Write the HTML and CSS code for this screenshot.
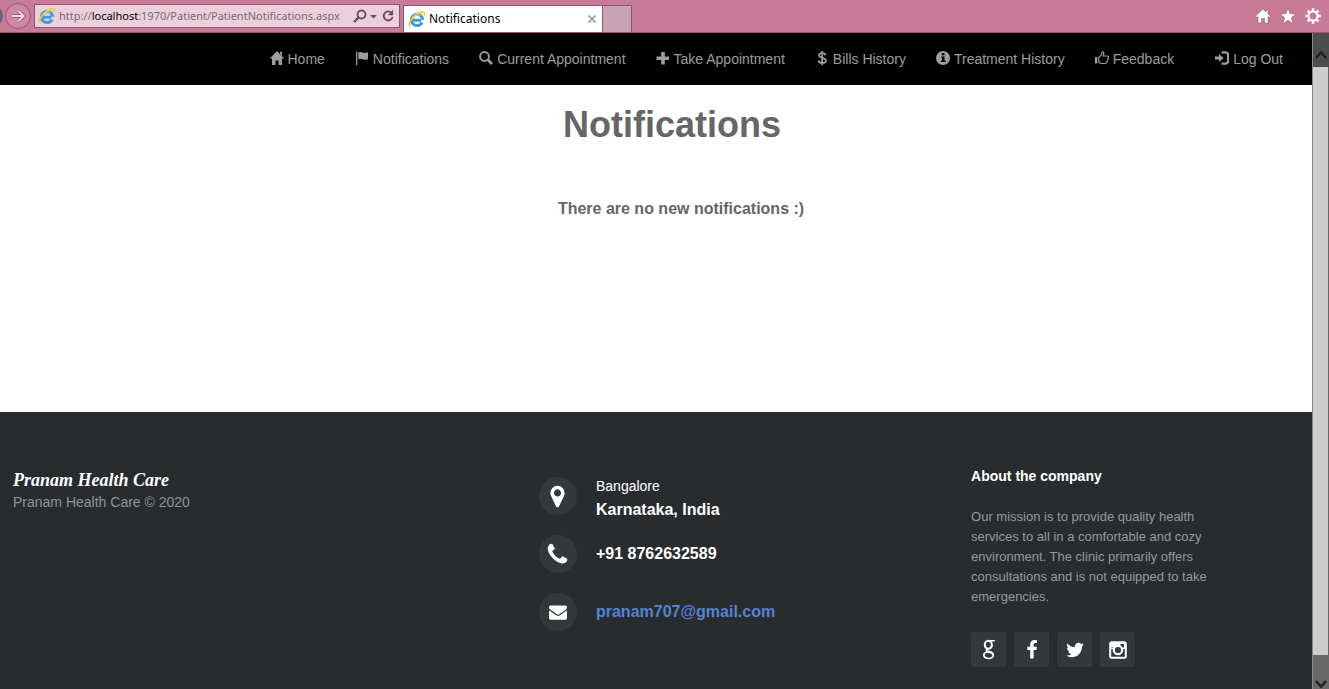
FILE: index.html
```html
<!DOCTYPE html>
<html lang="en">
<head>
<meta charset="utf-8">
<title>Notifications</title>
<link rel="stylesheet" href="styles.css">
</head>
<body>
<svg class="defs" aria-hidden="true">
  <defs>
    <symbol id="ie" viewBox="0 0 18 18">
      <path d="M4 10.2h9.2M14 12.500A5.600 5.600 0 1 1 14.600 9.800" fill="none" stroke="#3f9ad8" stroke-width="3"/>
      <path d="M4.500 7.500a5 5 0 0 1 8-1.400" fill="none" stroke="#8ccff2" stroke-width="1.200"/>
      <path d="M2.600 16.200C-.8 15 3.200 8 9 4.200c4-2.800 7.600-3.200 7.600-.8 0 .8-.3 1.600-.7 2.300" fill="none" stroke="#f0cb3c" stroke-width="1.700"/>
    </symbol>
  </defs>
</svg>

<header class="browser">
  <button class="round back" aria-label="Back"></button>
  <button class="round" aria-label="Forward">
    <svg viewBox="0 0 26 26"><path d="M6.500 13h12M13.500 7.500l5.500 5.500-5.500 5.500" fill="none" stroke="#8f4a66" stroke-width="4"/><path d="M6.500 13h12M13.500 7.500l5.500 5.500-5.500 5.500" fill="none" stroke="#f3dbe4" stroke-width="2.300"/></svg>
  </button>
  <div class="address">
    <svg class="ie"><use href="#ie"/></svg>
    <span class="url">http://<b>localhost</b>:1970/Patient/PatientNotifications.aspx</span>
    <button class="tool" aria-label="Search"><svg viewBox="0 0 14 14"><circle cx="8.500" cy="5.500" r="4" fill="none" stroke="#6d4c59" stroke-width="1.800"/><path d="M5.500 8.500L1 13" stroke="#6d4c59" stroke-width="2.400"/></svg></button>
    <button class="tool small" aria-label="Show addresses"><svg viewBox="0 0 8 14"><path d="M0 6h7L3.500 9.500z" fill="#6d4c59"/></svg></button>
    <button class="tool" aria-label="Refresh"><svg viewBox="0 0 14 14"><path d="M10.500 3.800A4.500 4.500 0 1 0 11.600 8" fill="none" stroke="#6d4c59" stroke-width="1.900"/><path d="M12 .8v5.400H6.800z" fill="#6d4c59"/></svg></button>
  </div>
  <div class="tab">
    <svg class="ie"><use href="#ie"/></svg>
    <span class="tab-title">Notifications</span>
    <button class="tool" aria-label="Close tab"><svg viewBox="0 0 14 14"><path d="M3.500 3.500l7 7M10.500 3.500l-7 7" stroke="#999" stroke-width="1.700"/></svg></button>
  </div>
  <button class="new-tab" aria-label="New tab"></button>
  <div class="browser-tools">
    <button class="tool" aria-label="Home page"><svg viewBox="0 0 16 16"><path d="M8 1L.5 8.300l1.300 1.200L3 8.500V15h3.500v-4.500h3V15H13V8.500l1.200 1 1.300-1.200L13 6V2h-2v2z" fill="#fff" stroke="#8a4560" stroke-width=".5"/></svg></button>
    <button class="tool" aria-label="Favorites"><svg viewBox="0 0 16 16"><path d="M8 0l2.100 5.800 6 .2-4.700 3.700 1.700 6L8 12.200l-5.100 3.500 1.700-6L-.1 6l6-.2z" fill="#fff" stroke="#8a4560" stroke-width=".5"/></svg></button>
    <button class="tool" aria-label="Settings"><svg viewBox="0 0 16 16"><g stroke="#fff" fill="none"><circle cx="8" cy="8" r="4.500" stroke-width="2"/><path stroke-width="2.500" d="M8 .3v2.700M8 13v2.700M.3 8H3M13 8h2.700M2.600 2.600l1.900 1.900M11.500 11.500l1.900 1.900M2.600 13.400l1.900-1.900M11.500 4.500l1.900-1.900"/></g></svg></button>
  </div>
</header>

<div class="viewport">
  <div class="page">
    <nav class="nav">
      <a href="#"><svg viewBox="0 0 14 14"><path d="M7 0l7.200 7.400H12V14H8.500V9.500h-3V14H2V7.400H-.2zM10 .8h2v4l-2-2z"/></svg>Home</a>
      <a href="#"><svg viewBox="0 0 14 14"><path d="M1 .5h1.300V14H1zM3.300 1.600C6-.2 7.500 3 13 1.300v6.900C8 10 6.500 6.400 3.300 8.400z"/></svg>Notifications</a>
      <a href="#"><svg viewBox="0 0 14 14"><circle cx="5.500" cy="5.500" r="4.400" fill="none" stroke="currentColor" stroke-width="2"/><path d="M8.600 8.600l4.400 4.400" stroke="currentColor" stroke-width="2.800"/></svg>Current Appointment</a>
      <a href="#"><svg viewBox="0 0 14 14"><path d="M5.200 1h3.600v4.400H13V9H8.800v4.500H5.200V9H.5V5.400h4.700z"/></svg>Take Appointment</a>
      <a href="#"><svg viewBox="0 0 14 14"><path d="M10.500 4.300C10 1.400 4 1.400 4 4.300c0 3.400 7 1.700 7 5.400 0 3.200-7 3.100-7.500-.2M7.200 0v14" fill="none" stroke="currentColor" stroke-width="1.700"/></svg>Bills History</a>
      <a href="#"><svg viewBox="0 0 14 14"><circle cx="7" cy="7" r="7"/><path d="M5.800 2h2.700v2.200H5.800zM5 5.400h3.500v4.300h1.200V11H4.800V9.700H6V6.600H5z" fill="#000"/></svg>Treatment History</a>
      <a href="#"><svg viewBox="0 0 14 14"><path d="M0 6h2.300v6.500H0z"/><path d="M3.800 6.500L6.500 3.800 7 1.300c1.500-1.200 2.500.6 1.300 3.700h4c1.500.3 1.500 2 .6 2.500.4 1-.1 1.700-.6 2 .2 1-.3 1.500-.8 1.800 0 1-.7 1.200-1.500 1.200H7c-1.500 0-2-.8-3.200-1z" fill="none" stroke="currentColor" stroke-width="1.200"/></svg>Feedback</a>
      <a href="#" class="logout"><svg viewBox="0 0 14 14"><path d="M0 5.500h4V3l4.500 4L4 11V8.500H0z"/><path d="M6.500 1.300H11l2 1.500v8.400l-2 1.500H6.500" fill="none" stroke="currentColor" stroke-width="2.200"/></svg>Log Out</a>
    </nav>

    <main class="content">
      <h1>Notifications</h1>
      <p class="message">There are no new notifications :)</p>
    </main>

    <footer class="footer">
      <section>
        <h2 class="brand">Pranam Health Care</h2>
        <p class="copyright">Pranam Health Care © 2020</p>
      </section>
      <address class="contacts">
        <div class="contact">
          <span class="disc"><svg viewBox="0 0 1792 1792"><path d="M1152 640q0-106-75-181t-181-75-181 75-75 181 75 181 181 75 181-75 75-181zm256 0q0 109-33 179l-364 774q-16 33-47.500 52t-67.500 19-67.500-19-46.500-52l-365-774q-33-70-33-179 0-212 150-362t362-150 362 150 150 362z"/></svg></span>
          <p class="place"><span class="city">Bangalore</span>Karnataka, India</p>
        </div>
        <div class="contact">
          <span class="disc"><svg viewBox="0 0 1792 1792"><path d="M1600 1240q0 27-10 70.500t-21 68.500q-21 50-122 106-94 51-186 51-27 0-53-3.500t-57.500-12.500-47-14.500-55.500-20.500-49-18q-98-35-175-83-127-79-264-216t-216-264q-48-77-83-175-3-9-18-49t-20.500-55.500-14.500-47-12.500-57.500-3.500-53q0-92 51-186 56-101 106-122 25-11 68.500-21t70.500-10q14 0 21 3 18 6 53 76 11 19 30 54t35 63.500 31 53.500q3 4 17.500 25t21.500 35.500 7 28.500q0 20-28.500 50t-62 55-62 53-28.500 46q0 9 5 22.500t8.500 20.500 14 24 11.500 19q76 137 174 235t235 174q2 1 19 11.500t24 14 20.500 8.500 22.500 5q18 0 46-28.500t53-62 55-62 50-28.500q14 0 28.500 7t35.500 21.500 25 17.500q25 15 53.500 31t63.500 35 54 30q70 35 76 53 3 7 3 21z"/></svg></span>
          <p>+91 8762632589</p>
        </div>
        <div class="contact">
          <span class="disc mail"><svg viewBox="0 0 1792 1792"><path d="M1792 710v794q0 66-47 113t-113 47h-1472q-66 0-113-47t-47-113v-794q44 49 101 87 362 246 497 345 57 42 92.500 65.500t94.500 48 110 24.500h2q51 0 110-24.500t94.500-48 92.500-65.500q170-123 498-345 57-39 100-87zm0-294q0 79-49 151t-122 123q-376 261-468 325-10 7-42.500 31t-54 38.500-52 32.500-57.500 27-50 9h-2q-23 0-50-9t-57.500-27-52-32.500-54-38.500-42.500-31q-91-64-262-182.500t-205-142.500q-62-42-117-115.500t-55-136.500q0-78 41.500-130t118.500-52h1472q65 0 112.500 47t47.500 113z"/></svg></span>
          <p><a href="mailto:pranam707@gmail.com">pranam707@gmail.com</a></p>
        </div>
      </address>
      <section class="about">
        <h3>About the company</h3>
        <p>Our mission is to provide quality health services to all in a comfortable and cozy environment. The clinic primarily offers consultations and is not equipped to take emergencies.</p>
        <div class="social">
          <a href="#" aria-label="Google"><svg viewBox="0 0 20 20"><g fill="none" stroke="#fff"><ellipse cx="9.300" cy="4.800" rx="3.500" ry="4" stroke-width="2"/><path d="M10 .7h5.800M12 8c1.200-1.200.8-2 1-3" stroke-width="1.500"/><path d="M8.500 8.800c-2 1.500-.8 2.300 1.500 2.900 3 .8 4.300 1.800 4.300 3.800" stroke-width="2"/><ellipse cx="9.500" cy="15.200" rx="4.700" ry="3.300" stroke-width="1.700"/></g></svg></a>
          <a href="#" aria-label="Facebook"><svg viewBox="0 0 1792 1792"><path d="M1343 12v264h-157q-86 0-116 36t-30 108v189h293l-39 296h-254v759h-306v-759h-255v-296h255v-218q0-186 104-288.500t277-102.500q147 0 228 12z"/></svg></a>
          <a href="#" aria-label="Twitter"><svg viewBox="0 0 1792 1792"><path d="M1684 408q-67 98-162 167 1 14 1 42 0 130-38 259.500t-115.500 248.500-184.500 210.500-258 146-323 54.500q-271 0-496-145 35 4 78 4 225 0 401-138-105-2-188-64.500t-114-159.500q33 5 61 5 43 0 85-11-112-23-185.500-111.500t-73.500-205.500v-4q68 38 146 41-66-44-105-115t-39-154q0-88 44-163 121 149 294.500 238.500t371.500 99.500q-8-38-8-74 0-134 94.500-228.500t228.500-94.500q140 0 236 102 109-21 205-78-37 115-142 178 93-10 186-50z"/></svg></a>
          <a href="#" aria-label="Instagram"><svg viewBox="0 0 20 20"><g fill="none" stroke="#fff"><rect x="2.200" y="2.200" width="15.600" height="15.600" rx="1.500" stroke-width="2"/><circle cx="10" cy="10" r="4.200" stroke-width="2.200"/><path d="M2.500 8.200h3.800M13.700 8.200h4" stroke-width="1.500"/></g><path d="M3 3h9.500v2.500L10 5 6 7H3zM12.500 3H18v5h-2V4h-3.500z"/></svg></a>
        </div>
      </section>
    </footer>
  </div>

  <div class="scrollbar">
    <button class="scroll-up" aria-label="Scroll up"><svg viewBox="0 0 14 10"><path d="M2 8l5-5.500L12 8" fill="none" stroke="#222" stroke-width="2.600"/></svg></button>
    <div class="thumb"></div>
    <button class="scroll-down" aria-label="Scroll down"><svg viewBox="0 0 14 10"><path d="M2 2l5 5.500L12 2" fill="none" stroke="#222" stroke-width="2.600"/></svg></button>
  </div>
</div>
</body>
</html>
```

FILE: styles.css
```css
* { box-sizing: border-box; }

body {
  margin: 0;
  min-height: 100vh;
  display: flex;
  flex-direction: column;
  background: #fff;
  font-family: "Liberation Sans", Arial, sans-serif;
  font-size: 14px;
  line-height: 20px;
}

h1, h2, h3, p { margin: 0; }
a { text-decoration: none; }
svg { display: block; flex: none; overflow: visible; }
button { border: 0; padding: 0; background: none; }
.defs { position: absolute; width: 0; height: 0; }

/* Browser bar */
.browser {
  display: flex;
  align-items: center;
  height: 33px;
  background: #c67b97;
  border-bottom: 1px solid #9c5873;
  font-family: "Noto Sans", "Open Sans", sans-serif;
  font-size: 12px;
  overflow: hidden;
}
.round {
  flex: none;
  width: 26px;
  height: 26px;
  border: 1px solid #9c5873;
  border-radius: 50%;
  background: #c98aa2;
}
.round svg { width: 24px; height: 24px; }
.back { margin-left: -23px; margin-right: 2px; background: #4c6a94; }
.address {
  display: flex;
  align-items: center;
  flex: none;
  width: 366px;
  height: 24px;
  margin-left: 3px;
  padding: 0 4px 0 3px;
  gap: 3px;
  border: 1px solid #94546d;
  background: #ebd0db;
  color: #7d6871;
}
.ie { width: 18px; height: 18px; }
.url { flex: 1; font-size: 11px; white-space: nowrap; }
.url b { font-weight: 400; color: #000; }
.tool svg { width: 14px; height: 14px; }
.small svg { width: 8px; }
.tab {
  display: flex;
  align-items: center;
  align-self: flex-end;
  flex: none;
  width: 200px;
  height: 27px;
  margin-left: 3px;
  padding: 0 3px 0 4px;
  gap: 3px;
  border: 1px solid #94546d;
  border-bottom: 0;
  background: #fff;
  color: #000;
}
.tab-title { flex: 1; }
.new-tab {
  align-self: flex-end;
  width: 29px;
  height: 27px;
  border: 1px solid #94546d;
  border-left: 0;
  border-bottom: 0;
  background: #c6a4b2;
}
.browser-tools { display: flex; gap: 9px; margin-left: auto; padding-right: 8px; }
.browser-tools svg { width: 16px; height: 16px; }

/* Page area */
.viewport { display: flex; flex: 1; }
.page { display: flex; flex-direction: column; flex: 1; }

.nav {
  display: flex;
  justify-content: flex-end;
  gap: 30px;
  padding: 16px 29px;
  background: #000;
}
.nav a { display: flex; gap: 4px; color: #9d9d9d; }
.nav svg { width: 14px; height: 14px; margin-top: 2px; fill: currentColor; }
.nav .logout { margin-left: 11px; }

.content {
  flex: 1;
  padding: 20px 0 20px 32px;
  text-align: center;
  color: #666;
}
.content h1 { font-size: 36px; line-height: 40px; }
.message {
  margin-top: 54px;
  padding-left: 18px;
  font-size: 16px;
  font-weight: 700;
}

/* Footer */
.footer {
  display: grid;
  grid-template-columns: 409fr 336fr 255fr;
  padding: 54px 13px 22px;
  background: #292c2f;
}
.brand {
  margin-top: 2px;
  font-family: "Liberation Serif", serif;
  font-size: 18px;
  font-style: italic;
  font-weight: 700;
  line-height: 24px;
  color: #fff;
}
.copyright { color: #8f9296; }
.contacts {
  display: flex;
  flex-direction: column;
  gap: 20px;
  padding-top: 11px;
  font-style: normal;
}
.contact {
  display: flex;
  align-items: center;
  gap: 19px;
  height: 38px;
  font-size: 16px;
  font-weight: 700;
  line-height: 24px;
  color: #fff;
}
.contact a { color: #5383d3; }
.place { padding-top: 4px; }
.city { display: block; font-size: 14px; font-weight: 400; }
.disc {
  display: flex;
  align-items: center;
  justify-content: center;
  width: 38px;
  height: 38px;
  border-radius: 50%;
  background: #33383b;
}
.disc svg { width: 25px; height: 25px; fill: #fff; }
.mail svg { width: 18px; height: 18px; }

.about h3 { font-size: 14px; color: #fff; }
.about p {
  max-width: 240px;
  margin-top: 21px;
  font-size: 13px;
  color: #92999f;
}
.social { display: flex; gap: 8px; margin-top: 25px; }
.social a {
  display: flex;
  align-items: center;
  justify-content: center;
  width: 35px;
  height: 35px;
  border-radius: 2px;
  background: #33383b;
}
.social svg { width: 20px; height: 20px; fill: #fff; }

/* Scrollbar */
.scrollbar {
  display: flex;
  flex-direction: column;
  width: 17px;
  border-left: 1px solid #8a8a8a;
  background: #666;
}
.thumb { flex: 1; margin-right: 1px; background: #cdcdcd; }
.scrollbar button { display: flex; justify-content: center; height: 34px; }
.scrollbar svg { width: 14px; height: 10px; }
.scrollbar .scroll-up { align-items: flex-end; padding-bottom: 7px; background: #4d4d4d; }
.scrollbar .scroll-down { align-items: flex-end; background: #696969; }
```
